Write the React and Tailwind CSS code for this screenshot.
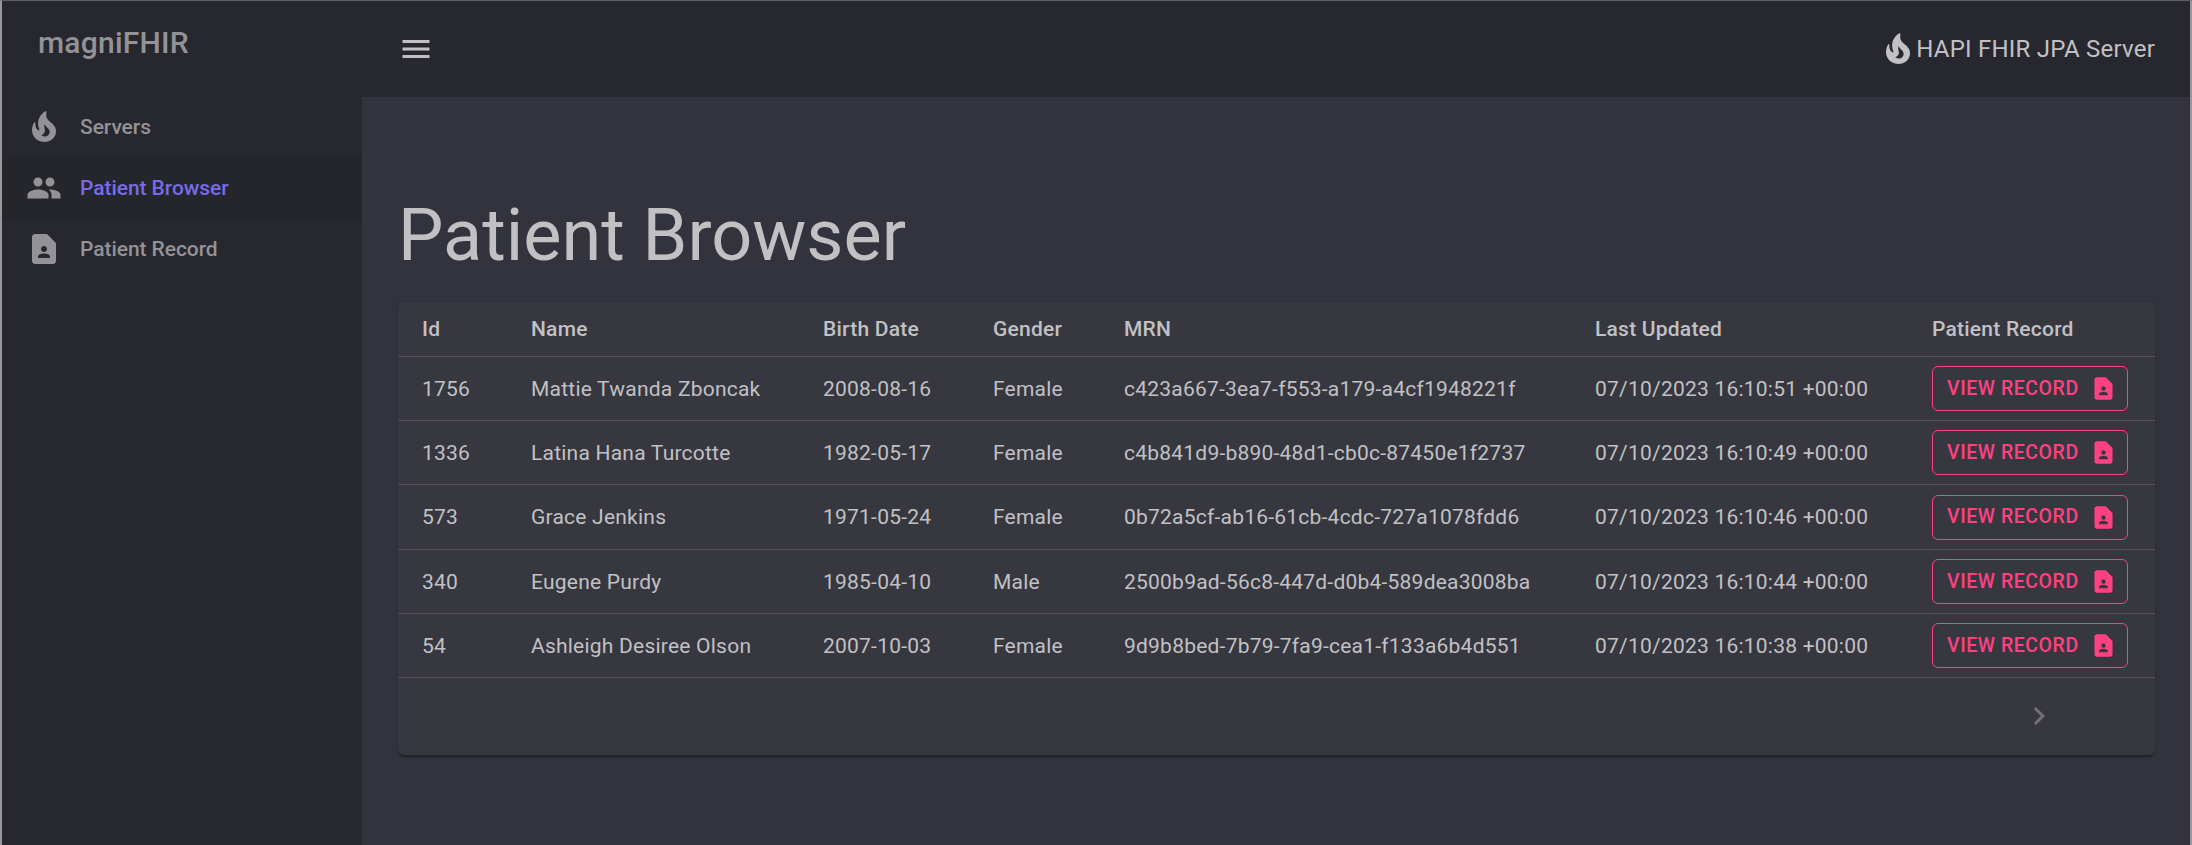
import { MdMenu, MdPeople, MdContactPage, MdChevronRight } from "react-icons/md";

const patients = [
  ["1756", "Mattie Twanda Zboncak", "2008-08-16", "Female", "c423a667-3ea7-f553-a179-a4cf1948221f", "07/10/2023 16:10:51 +00:00"],
  ["1336", "Latina Hana Turcotte", "1982-05-17", "Female", "c4b841d9-b890-48d1-cb0c-87450e1f2737", "07/10/2023 16:10:49 +00:00"],
  ["573", "Grace Jenkins", "1971-05-24", "Female", "0b72a5cf-ab16-61cb-4cdc-727a1078fdd6", "07/10/2023 16:10:46 +00:00"],
  ["340", "Eugene Purdy", "1985-04-10", "Male", "2500b9ad-56c8-447d-d0b4-589dea3008ba", "07/10/2023 16:10:44 +00:00"],
  ["54", "Ashleigh Desiree Olson", "2007-10-03", "Female", "9d9b8bed-7b79-7fa9-cea1-f133a6b4d551", "07/10/2023 16:10:38 +00:00"],
];

const columns = ["Id", "Name", "Birth Date", "Gender", "MRN", "Last Updated", "Patient Record"];

function FlameIcon({ className }) {
  return (
    <svg viewBox="0 0 24 24" fill="currentColor" className={className}>
      <path d="M19.48 12.35c-1.57-4.08-7.16-4.3-5.81-10.23.1-.44-.37-.78-.75-.55C9.29 3.71 6.68 8 8.87 13.62c.18.46-.36.89-.75.59-1.81-1.37-2-3.34-1.84-4.75.06-.52-.62-.77-.91-.34C4.69 10.16 4 11.84 4 14.37c.38 5.6 5.11 7.32 6.81 7.54 2.43.31 5.06-.14 6.95-1.87 2.08-1.93 2.84-5.01 1.72-7.69zm-9.28 5.03c1.44-.35 2.18-1.39 2.38-2.31.33-1.43-.96-2.83-.09-5.09.33 1.87 3.27 3.04 3.27 5.08.08 2.53-2.66 4.7-5.56 2.32z" />
    </svg>
  );
}

function NavItem({ icon: Icon, label, active }) {
  return (
    <a className={active ? "flex h-[61px] items-center gap-[18px] bg-[#25262b] pb-0.5 pl-6 text-[#776be7]" : "flex h-[61px] items-center gap-[18px] pb-0.5 pl-6 text-[#939397]"}>
      <Icon className="size-9 text-[#939397]" />
      <span className="text-[21px] leading-[30px] font-medium tracking-[-0.003em]">{label}</span>
    </a>
  );
}

export default function App() {
  return (
    <div className="flex h-[845px] w-[2192px] border-x-2 border-t border-x-[#999999] border-t-[#5f6063] bg-[#32333d] font-[Roboto,sans-serif] text-[#c1c1c4]">
      <aside className="flex w-[360px] shrink-0 flex-col bg-[#27272f]">
        <div className="flex h-24 items-start pt-[18px] pl-9 text-[30px] leading-[48px] font-medium tracking-[0.0075em] text-[#939397]">magniFHIR</div>
        <nav className="flex flex-col">
          <NavItem icon={FlameIcon} label="Servers" />
          <NavItem icon={MdPeople} label="Patient Browser" active />
          <NavItem icon={MdContactPage} label="Patient Record" />
        </nav>
      </aside>
      <div className="flex min-w-0 flex-1 flex-col">
        <header className="flex h-24 shrink-0 items-center justify-between bg-[#27272f] pr-[35px] pl-9">
          <MdMenu className="size-9" />
          <div className="flex items-center text-2xl tracking-[0.00938em]">
            <FlameIcon className="size-9" />
            <span>HAPI FHIR JPA Server</span>
          </div>
        </header>
        <main className="flex flex-col pt-[97px] pr-[35px] pl-9">
          <h1 className="text-[72px] leading-[84px]">Patient Browser</h1>
          <section className="mt-6 h-[453px] rounded-md bg-[#373740] shadow-[0_3px_2px_-1px_rgba(0,0,0,0.3),0_1px_4px_rgba(0,0,0,0.15)]">
            <table className="w-full table-fixed border-separate border-spacing-0 text-left text-[21px] leading-[30px] tracking-[0.01071em]">
              <colgroup>
                <col className="w-[109px]" />
                <col className="w-[292px]" />
                <col className="w-[170px]" />
                <col className="w-[131px]" />
                <col className="w-[471px]" />
                <col className="w-[337px]" />
                <col />
              </colgroup>
              <thead>
                <tr className="h-[55px]">
                  {columns.map((c) => (
                    <th key={c} className="border-b border-[#4f4f55] pl-6 font-medium">{c}</th>
                  ))}
                </tr>
              </thead>
              <tbody>
                {patients.map((row, i) => (
                  <tr key={row[0]} className={i === 2 ? "h-[65px]" : "h-16"}>
                    {row.map((cell) => (
                      <td key={cell} className="border-b border-[#4f4f55] pl-6 whitespace-nowrap">{cell}</td>
                    ))}
                    <td className="border-b border-[#4f4f55] pl-6">
                      <button className="flex h-[45px] w-[196px] items-center justify-between rounded-md border border-[#ff4081] pr-[10px] pl-[14px] text-[19.5px] font-medium tracking-[0.02857em] text-[#ff4081]">
                        VIEW RECORD
                        <MdContactPage className="size-[27px]" />
                      </button>
                    </td>
                  </tr>
                ))}
              </tbody>
            </table>
            <div className="flex h-[75px] items-center justify-end pr-[98px] text-[#6f6f75]">
              <MdChevronRight className="size-9" />
            </div>
          </section>
        </main>
      </div>
    </div>
  );
}
